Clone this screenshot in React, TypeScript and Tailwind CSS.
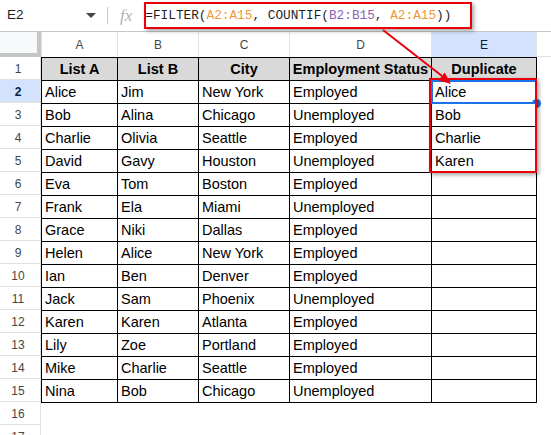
const rows: string[][] = [
  ["Alice", "Jim", "New York", "Employed", "Alice"],
  ["Bob", "Alina", "Chicago", "Unemployed", "Bob"],
  ["Charlie", "Olivia", "Seattle", "Employed", "Charlie"],
  ["David", "Gavy", "Houston", "Unemployed", "Karen"],
  ["Eva", "Tom", "Boston", "Employed", ""],
  ["Frank", "Ela", "Miami", "Unemployed", ""],
  ["Grace", "Niki", "Dallas", "Employed", ""],
  ["Helen", "Alice", "New York", "Employed", ""],
  ["Ian", "Ben", "Denver", "Employed", ""],
  ["Jack", "Sam", "Phoenix", "Unemployed", ""],
  ["Karen", "Karen", "Atlanta", "Employed", ""],
  ["Lily", "Zoe", "Portland", "Employed", ""],
  ["Mike", "Charlie", "Seattle", "Employed", ""],
  ["Nina", "Bob", "Chicago", "Unemployed", ""],
];

const headers = ["List A", "List B", "City", "Employment Status", "Duplicate"];
const letters = ["A", "B", "C", "D", "E"];

function FormulaBar() {
  return (
    <div className="relative flex h-[32px] items-center border-b border-[#c4c7c5] bg-white">
      <div className="flex w-[107px] items-center justify-between pl-[7px] pr-[10px]">
        <span className="text-[13.5px] text-[#1f1f1f]">E2</span>
        <svg width="10" height="6" viewBox="0 0 10 6" className="mr-[1px]">
          <path d="M0 0 L10 0 L5 5 Z" fill="#444746" />
        </svg>
      </div>
      <div className="h-[17px] w-px bg-[#c4c7c5]" />
      <span className="ml-[12px] font-['Liberation_Serif',serif] text-[17px] italic text-[#b0b3b6]">fx</span>
      <span className="ml-[13px] whitespace-pre font-['Liberation_Mono',monospace] text-[12.75px] text-[#1f1f1f]">
        =FILTER(<span className="text-[#f09a36]">A2:A15</span>, COUNTIF(
        <span className="text-[#8f62b5]">B2:B15</span>, <span className="text-[#f09a36]">A2:A15</span>))
      </span>
      {/* annotation box */}
      <div className="absolute left-[144px] top-[2px] h-[27px] w-[328px] border-[2.5px] border-[#e8000b] shadow-[2px_2px_4px_rgba(0,0,0,0.35)]" />
    </div>
  );
}

function ColumnHeader() {
  return (
    <div className="grid h-[25px] grid-cols-[41px_76px_81px_91px_142px_105px_1fr] bg-white text-[12px] text-[#444746]">
      <div className="border-b-4 border-r-4 border-[#c4c7c5] bg-[#f8f9fa]" />
      {letters.map((l) => (
        <div
          key={l}
          className={
            l === "E"
              ? "flex items-center justify-center border-l border-[#e1e1e1] bg-[#d3e3fd] pt-px text-[#041e49]"
              : "flex items-center justify-center border-l border-[#e1e1e1] pt-px"
          }
        >
          {l}
        </div>
      ))}
      <div className="border-b border-l border-[#e1e1e1]" />
    </div>
  );
}

export default function App() {
  return (
    <div className="relative h-[435px] w-[551px] overflow-hidden bg-white font-['Liberation_Sans',Arial,sans-serif]">
      <FormulaBar />
      <ColumnHeader />

      <div className="flex">
        {/* row numbers */}
        <div className="flex w-[41px] shrink-0 flex-col border-r border-[#e1e1e1] text-[12px] text-[#444746]">
          {Array.from({ length: 17 }, (_, i) => i + 1).map((n) => (
            <div
              key={n}
              className={
                n === 2
                  ? "flex h-[23px] shrink-0 items-center justify-center border-b border-[#e1e1e1] bg-[#d3e3fd] pr-[4px] pt-[2px] font-bold text-[#041e49]"
                  : "flex h-[23px] shrink-0 items-center justify-center border-b border-[#e1e1e1] pr-[4px] pt-[2px]"
              }
            >
              {n}
            </div>
          ))}
        </div>

        {/* sheet body */}
        <div className="flex-1">
          <div className="relative w-fit">
            <div className="grid grid-cols-[75px_80px_90px_141px_104px] gap-px bg-black p-px text-[14.5px] text-black">
              {headers.map((h) => (
                <div key={h} className="flex h-[22px] items-center justify-center bg-[#d9d9d9] pt-[2px] font-bold">
                  {h}
                </div>
              ))}
              {rows.map((r, ri) =>
                r.map((c, ci) => (
                  <div key={`${ri}-${ci}`} className="relative flex h-[22px] items-center bg-white pl-[3px] pt-[2px]">
                    {c}
                    {ri === 0 && ci === 4 && (
                      <>
                        <div className="absolute inset-[-1px] border-2 border-[#1a73e8]" />
                        <div className="absolute bottom-[-5px] right-[-5px] h-[9px] w-[9px] rounded-full bg-[#1a73e8]" />
                      </>
                    )}
                  </div>
                ))
              )}
            </div>
            {/* annotation box around E2:E5 */}
            <div className="absolute left-[388px] top-[21px] h-[95px] w-[108px] border-[2.5px] border-[#e8000b] shadow-[2px_2px_4px_rgba(0,0,0,0.35)]" />
          </div>
        </div>
      </div>

      {/* annotation arrow */}
      <svg className="pointer-events-none absolute left-0 top-0" width="551" height="435">
        <line x1="383" y1="30" x2="442" y2="76" stroke="#e8000b" strokeWidth="2" />
        <polygon points="451,84 438.5,80.4 444.7,72.6" fill="#e8000b" />
      </svg>
    </div>
  );
}
